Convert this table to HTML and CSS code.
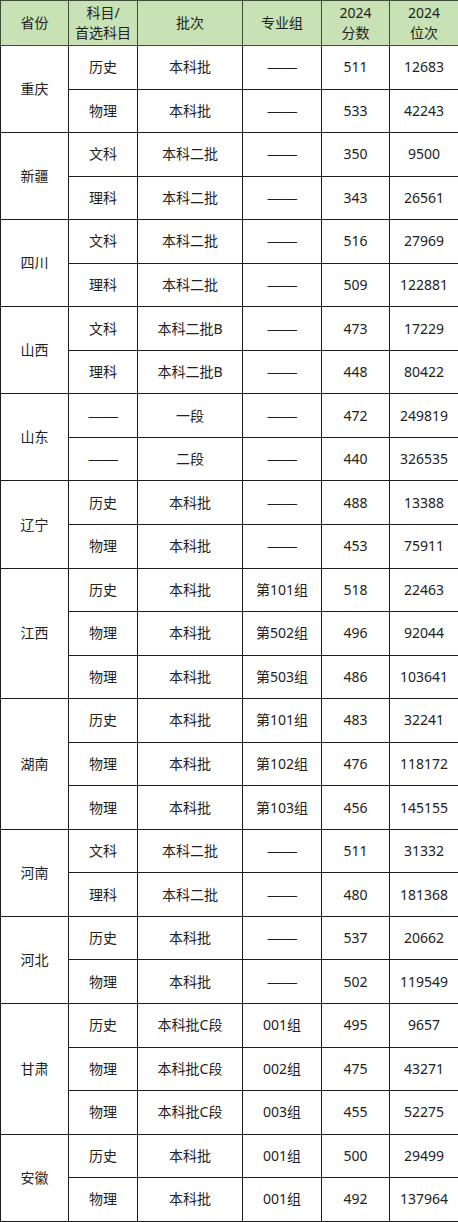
FILE: index.html
```html
<!DOCTYPE html>
<html lang="zh">
<head>
<meta charset="utf-8">
<link rel="stylesheet" href="styles.css">
</head>
<body>
<table class="score-table">
  <colgroup>
    <col class="c1"><col class="c2"><col class="c3"><col class="c4"><col class="c5"><col class="c6">
  </colgroup>
  <thead>
    <tr>
      <th>省份</th>
      <th>科目/<br>首选科目</th>
      <th>批次</th>
      <th>专业组</th>
      <th>2024<br>分数</th>
      <th>2024<br>位次</th>
    </tr>
  </thead>
  <tbody>
    <tr><td rowspan="2">重庆</td><td>历史</td><td>本科批</td><td><span class="dash">——</span></td><td>511</td><td>12683</td></tr>
    <tr><td>物理</td><td>本科批</td><td><span class="dash">——</span></td><td>533</td><td>42243</td></tr>
    <tr><td rowspan="2">新疆</td><td>文科</td><td>本科二批</td><td><span class="dash">——</span></td><td>350</td><td>9500</td></tr>
    <tr><td>理科</td><td>本科二批</td><td><span class="dash">——</span></td><td>343</td><td>26561</td></tr>
    <tr><td rowspan="2">四川</td><td>文科</td><td>本科二批</td><td><span class="dash">——</span></td><td>516</td><td>27969</td></tr>
    <tr><td>理科</td><td>本科二批</td><td><span class="dash">——</span></td><td>509</td><td>122881</td></tr>
    <tr><td rowspan="2">山西</td><td>文科</td><td>本科二批B</td><td><span class="dash">——</span></td><td>473</td><td>17229</td></tr>
    <tr><td>理科</td><td>本科二批B</td><td><span class="dash">——</span></td><td>448</td><td>80422</td></tr>
    <tr><td rowspan="2">山东</td><td><span class="dash">——</span></td><td>一段</td><td><span class="dash">——</span></td><td>472</td><td>249819</td></tr>
    <tr><td><span class="dash">——</span></td><td>二段</td><td><span class="dash">——</span></td><td>440</td><td>326535</td></tr>
    <tr><td rowspan="2">辽宁</td><td>历史</td><td>本科批</td><td><span class="dash">——</span></td><td>488</td><td>13388</td></tr>
    <tr><td>物理</td><td>本科批</td><td><span class="dash">——</span></td><td>453</td><td>75911</td></tr>
    <tr><td rowspan="3">江西</td><td>历史</td><td>本科批</td><td>第101组</td><td>518</td><td>22463</td></tr>
    <tr><td>物理</td><td>本科批</td><td>第502组</td><td>496</td><td>92044</td></tr>
    <tr><td>物理</td><td>本科批</td><td>第503组</td><td>486</td><td>103641</td></tr>
    <tr><td rowspan="3">湖南</td><td>历史</td><td>本科批</td><td>第101组</td><td>483</td><td>32241</td></tr>
    <tr><td>物理</td><td>本科批</td><td>第102组</td><td>476</td><td>118172</td></tr>
    <tr><td>物理</td><td>本科批</td><td>第103组</td><td>456</td><td>145155</td></tr>
    <tr><td rowspan="2">河南</td><td>文科</td><td>本科二批</td><td><span class="dash">——</span></td><td>511</td><td>31332</td></tr>
    <tr><td>理科</td><td>本科二批</td><td><span class="dash">——</span></td><td>480</td><td>181368</td></tr>
    <tr><td rowspan="2">河北</td><td>历史</td><td>本科批</td><td><span class="dash">——</span></td><td>537</td><td>20662</td></tr>
    <tr><td>物理</td><td>本科批</td><td><span class="dash">——</span></td><td>502</td><td>119549</td></tr>
    <tr><td rowspan="3">甘肃</td><td>历史</td><td>本科批C段</td><td>001组</td><td>495</td><td>9657</td></tr>
    <tr><td>物理</td><td>本科批C段</td><td>002组</td><td>475</td><td>43271</td></tr>
    <tr><td>物理</td><td>本科批C段</td><td>003组</td><td>455</td><td>52275</td></tr>
    <tr><td rowspan="2">安徽</td><td>历史</td><td>本科批</td><td>001组</td><td>500</td><td>29499</td></tr>
    <tr><td>物理</td><td>本科批</td><td>001组</td><td>492</td><td>137964</td></tr>
  </tbody>
</table>
</body>
</html>
```

FILE: styles.css
```css
html, body {
  margin: 0;
  padding: 0;
  background: #ffffff;
}

.score-table {
  width: 458px;
  border-collapse: collapse;
  table-layout: fixed;
  font-family: "Noto Sans", "Noto Sans CJK SC", sans-serif;
  font-size: 14px;
  color: #222222;
}

.c1 { width: 68px; }
.c2 { width: 69px; }
.c3 { width: 105px; }
.c4 { width: 79px; }
.c5 { width: 68px; }
.c6 { width: 69px; }

.score-table th,
.score-table td {
  border: 1.5px solid #1c1c1c;
  padding: 0;
  text-align: center;
  vertical-align: middle;
  line-height: 20px;
  white-space: nowrap;
}

.score-table th {
  background: #c8e2b5;
  font-weight: normal;
  height: 44px;
  border-color: #3f4d38;
}

.score-table tbody tr {
  height: 43.55px;
}

.dash {
  font-family: "Liberation Sans", sans-serif;
  font-size: 15px;
  letter-spacing: -0.5px;
}
```
